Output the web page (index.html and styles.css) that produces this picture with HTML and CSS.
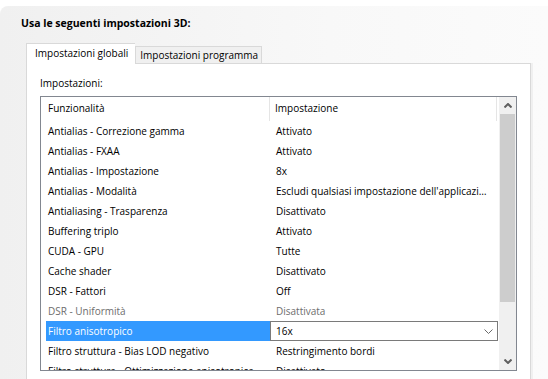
FILE: index.html
```html
<!DOCTYPE html>
<html>
<head>
  <title>Impostazioni 3D</title>
  <link rel="stylesheet" href="styles.css">
</head>
<body>
  <div class="finestra">
    <h2 class="titolo">Usa le seguenti impostazioni 3D:</h2>
    <div class="schede">
      <div class="scheda attiva">Impostazioni globali</div>
      <div class="scheda">Impostazioni programma</div>
    </div>
    <div class="pannello">
      <p class="etichetta">Impostazioni:</p>
      <div class="lista">
        <div class="contenuto">
          <div class="intestazione">
            <div class="col1">Funzionalità</div>
            <div class="col2">Impostazione</div>
          </div>
          <div class="riga"><div class="col1">Antialias - Correzione gamma</div><div class="col2">Attivato</div></div>
          <div class="riga"><div class="col1">Antialias - FXAA</div><div class="col2">Attivato</div></div>
          <div class="riga"><div class="col1">Antialias - Impostazione</div><div class="col2">8x</div></div>
          <div class="riga"><div class="col1">Antialias - Modalità</div><div class="col2">Escludi qualsiasi impostazione dell'applicazi…</div></div>
          <div class="riga"><div class="col1">Antialiasing - Trasparenza</div><div class="col2">Disattivato</div></div>
          <div class="riga"><div class="col1">Buffering triplo</div><div class="col2">Attivato</div></div>
          <div class="riga"><div class="col1">CUDA - GPU</div><div class="col2">Tutte</div></div>
          <div class="riga"><div class="col1">Cache shader</div><div class="col2">Disattivato</div></div>
          <div class="riga"><div class="col1">DSR - Fattori</div><div class="col2">Off</div></div>
          <div class="riga disattiva"><div class="col1">DSR - Uniformità</div><div class="col2">Disattivata</div></div>
          <div class="riga selezionata">
            <div class="col1">Filtro anisotropico</div>
            <div class="col2 combo">
              <span>16x</span>
              <svg width="9" height="5" viewBox="0 0 9 5"><polyline points="0.5,0.5 4.5,4.5 8.5,0.5" fill="none" stroke="#6a6a6a" stroke-width="1"/></svg>
            </div>
          </div>
          <div class="riga"><div class="col1">Filtro struttura - Bias LOD negativo</div><div class="col2">Restringimento bordi</div></div>
          <div class="riga"><div class="col1">Filtro struttura - Ottimizzazione anisotropica</div><div class="col2">Disattivato</div></div>
        </div>
        <div class="scrollbar">
          <div class="freccia">
            <svg width="8" height="5" viewBox="0 0 8 5"><polyline points="0.5,4.5 4,1 7.5,4.5" fill="none" stroke="#606060" stroke-width="2"/></svg>
          </div>
          <div class="cursore"></div>
          <div class="binario"></div>
          <div class="freccia">
            <svg width="8" height="5" viewBox="0 0 8 5"><polyline points="0.5,0.5 4,4 7.5,0.5" fill="none" stroke="#606060" stroke-width="2"/></svg>
          </div>
        </div>
      </div>
    </div>
  </div>
</body>
</html>
```

FILE: styles.css
```css
body {
  margin: 0;
  height: 379px;
  overflow: hidden;
  background-color: #ffffff;
  font-family: "Open Sans", "Noto Sans", sans-serif;
  font-size: 10px;
  color: #000000;
}

.finestra {
  margin-top: 6px;
  height: 373px;
  display: flex;
  flex-direction: column;
  border-top-left-radius: 8px;
  background: linear-gradient(to right, #f0f0f0, #f8f8f8 60%, #fbfbfb);
}

.titolo {
  margin: 0;
  padding: 9px 0 0 21px;
  font-size: 10.5px;
  line-height: 16px;
  font-weight: bold;
}

.schede {
  display: flex;
  align-items: flex-end;
  height: 21px;
  margin: 12px 0 -1px 26px;
  position: relative;
  z-index: 1;
}

.scheda {
  height: 17px;
  line-height: 16px;
  padding: 0 3px 0 4px;
  box-sizing: border-box;
  border: 1px solid #d9d9d9;
  border-bottom: none;
  background-color: #f0f0f0;
  margin-bottom: 1px;
}

.scheda.attiva {
  height: 21px;
  line-height: 18px;
  padding: 0 7px 0 8px;
  background-color: #ffffff;
  margin-bottom: 0;
  border-right: none;
}

.pannello {
  flex: 1;
  margin-left: 26px;
  width: 505px;
  box-sizing: border-box;
  border: 1px solid #d9d9d9;
  border-bottom: none;
  background-color: #ffffff;
  box-shadow: 2px 0 0 #f0f0f0;
  padding: 11px 0 0 13px;
}

.etichetta {
  margin: 0;
  line-height: 16px;
}

.lista {
  margin-top: 5px;
  width: 477px;
  height: 275px;
  box-sizing: border-box;
  border: 1px solid #828790;
  display: flex;
}

.contenuto {
  width: 458px;
  overflow: hidden;
}

.intestazione {
  display: flex;
  height: 24px;
  line-height: 23px;
}

.intestazione .col1 {
  width: 229px;
  padding-left: 7px;
  box-sizing: border-box;
  border-right: 1px solid #e5e5e5;
}

.intestazione .col2 {
  width: 227px;
  padding-left: 5px;
  box-sizing: border-box;
  border-right: 1px solid #e5e5e5;
}

.riga {
  display: flex;
  height: 20px;
  line-height: 20px;
  white-space: nowrap;
}

.riga .col1 {
  width: 229px;
  padding-left: 7px;
  box-sizing: border-box;
  overflow: hidden;
}

.riga .col2 {
  width: 228px;
  padding-left: 6px;
  box-sizing: border-box;
  overflow: hidden;
}

.riga.disattiva {
  color: #6d6d6d;
}

.riga.selezionata .col1 {
  width: 229px;
  color: #ffffff;
  background: linear-gradient(to right, transparent 5px, #3399ff 5px);
}

.combo {
  display: flex;
  align-items: center;
  justify-content: space-between;
  border: 1px solid #7a7a7a;
  line-height: 18px;
  padding-right: 4px;
}

.riga .col2.combo {
  width: 228px;
  padding-left: 5px;
}

.scrollbar {
  width: 17px;
  margin-left: 1px;
  display: flex;
  flex-direction: column;
  background-color: #f0f0f0;
}

.freccia {
  height: 17px;
  display: flex;
  align-items: center;
  justify-content: center;
}

.cursore {
  height: 188px;
  margin: 0 1px;
  background-color: #cdcdcd;
}

.binario {
  flex: 1;
}
```
